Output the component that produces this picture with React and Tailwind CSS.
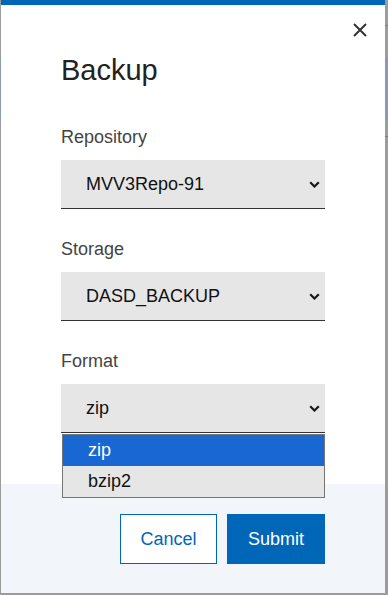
const Chevron = () => (
  <svg width="11" height="7" viewBox="0 0 11 7" fill="none">
    <path d="M1.2 1.2 L5.5 5.5 L9.8 1.2" stroke="#1a1a1a" strokeWidth="2.2" />
  </svg>
);

const Field = ({ label, value, className = '' }) => (
  <div className={`flex flex-col ${className}`}>
    <label className="text-[18px] leading-[21px] text-[#444]">{label}</label>
    <div className="mt-[12px] h-[49px] bg-[#e6e6e6] border-b border-[#333] flex items-center justify-between pl-[25px] pr-[5px]">
      <span className="text-[18px] leading-[21px] text-[#111]">{value}</span>
      <Chevron />
    </div>
  </div>
);

const App = () => {
  const formats = ['zip', 'bzip2'];

  return (
    <div
      className="w-[388px] h-[595px] bg-[#9c9c9c] flex flex-col overflow-hidden"
      style={{ fontFamily: '"Liberation Sans", Arial, sans-serif' }}
    >
      <div className="flex h-[593px]">
        {/* backdrop strip left */}
        <div className="w-[1px] flex flex-col">
          <div className="h-[58px]" />
          <div className="h-[62px] bg-[#8a9ab2]" />
        </div>

        {/* modal */}
        <div className="w-[384px] bg-white flex flex-col relative">
          <div className="h-[5px] bg-[#0067b8]" />
          <div className="flex justify-end pr-[18px] pt-[18px]">
            <button className="w-[14px] h-[14px] flex items-center justify-center">
              <svg width="14" height="14" viewBox="0 0 14 14">
                <path d="M1 1 L13 13 M13 1 L1 13" stroke="#333" strokeWidth="2" />
              </svg>
            </button>
          </div>

          <div className="px-[60px] flex-1 flex flex-col">
            <h1 className="mt-[16px] text-[29px] leading-[34px] text-[#222]">Backup</h1>

            <Field label="Repository" value="MVV3Repo-91" className="mt-[40px]" />
            <Field label="Storage" value="DASD_BACKUP" className="mt-[30px]" />

            <div className="relative">
              <Field label="Format" value="zip" className="mt-[30px]" />
              <ul className="absolute left-[1px] right-0 top-[calc(100%+1px)] z-10 bg-[#e6e6e6] border border-[#767676]">
                {formats.map((f, i) => (
                  <li
                    key={f}
                    className={`h-[31px] flex items-center pl-[25px] text-[18px] leading-[21px] ${i === 0 ? 'bg-[#1967d2] text-white' : 'text-[#111]'}`}
                  >
                    {f}
                  </li>
                ))}
              </ul>
            </div>
          </div>

          <div className="h-[109px] bg-[#f2f6fb] flex justify-end items-start gap-[10px] pt-[30px] pr-[60px]">
            <button className="w-[97px] h-[50px] border border-[#0067b8] bg-white text-[#0067b8] text-[18px]">
              Cancel
            </button>
            <button className="w-[98px] h-[50px] bg-[#0067b8] text-white text-[18px]">
              Submit
            </button>
          </div>
        </div>

        {/* backdrop strip right */}
        <div className="flex-1 flex flex-col">
          <div className="h-[25px]" />
          <div className="h-[1px] bg-[#7a7a7a]" />
          <div className="h-[32px]" />
          <div className="h-[63px] bg-[#8a9ab2]" />
          <div className="h-[15px]" />
          <div className="h-[1px] bg-[#7a7a7a]" />
        </div>
      </div>
    </div>
  );
};

export default App;
